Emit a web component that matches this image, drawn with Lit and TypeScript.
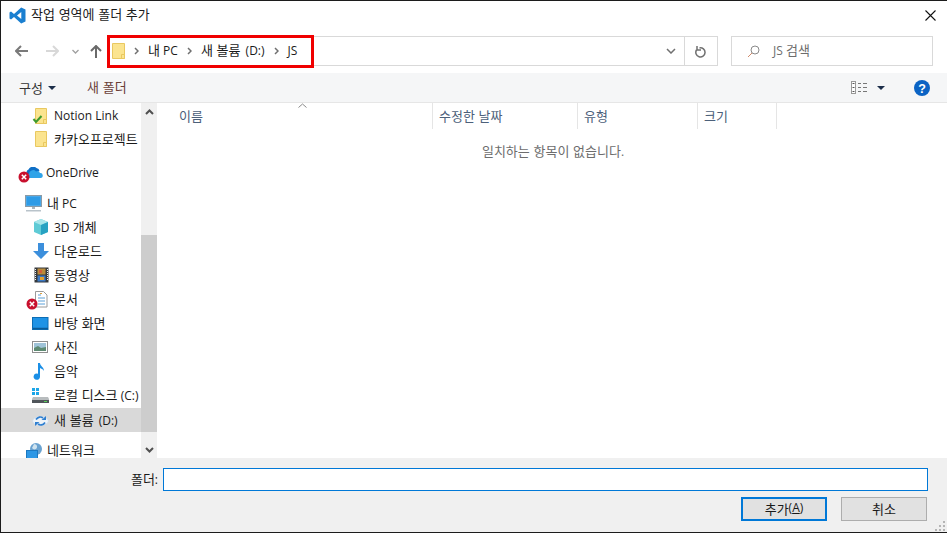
import { LitElement, html, css, TemplateResult } from "lit";
import { customElement } from "lit/decorators.js";

const k = (text: string) =>
  text.split(/([가-힣]+(?: [가-힣]+)*)/).map((p, i) => (i % 2 ? html`<span class="k">${p}</span>` : p));

const icons: Record<string, TemplateResult> = {
  notion: html`<svg width="18" height="18" viewBox="0 0 18 18"><path d="M3.500 2.500h11v15h-11z" fill="#fbe48f" stroke="#e9c860"/><path d="M11.500 13.500h3v4h-3z" fill="#fbe48f" stroke="#e9c860"/><path d="M1.500 13l2.500 3 5.500-6" fill="none" stroke="#3e9a2d" stroke-width="2"/></svg>`,
  folder: html`<svg width="18" height="18" viewBox="0 0 18 18"><path d="M3.500 1.500h11v15h-11z" fill="#fbe48f" stroke="#e9c860"/><path d="M11.500 12.500h3v4h-3z" fill="#fbe48f" stroke="#e9c860"/></svg>`,
  cloud: html`<svg width="19" height="11" viewBox="0 0 19 11"><path d="M3 7a3 3 0 0 1 1.500-4.500 5 5 0 0 1 8-1.500 3.500 3.500 0 0 1 3 3L9 7z" fill="#0f6fc6"/><path d="M5 11a2.500 2.500 0 0 1 0-4 4 4 0 0 1 7-2.500 3 3 0 0 1 4 1.500 2.500 2.500 0 0 1 .5 5z" fill="#2fa3e8"/></svg>`,
  pc: html`<svg width="18" height="17" viewBox="0 0 18 17"><rect x=".5" y=".5" width="16" height="11" fill="#4aa8e8" stroke="#8a9aa6"/><rect x="2" y="2" width="13" height="8" fill="#2e9be6"/><path d="M7 12h3v2H7z" fill="#a8b4bc"/><path d="M1 15h15v1.500H1z" fill="#b9c3ca"/></svg>`,
  cube: html`<svg width="18" height="18" viewBox="0 0 18 18"><path d="M9 1l7 3v10l-7 3-7-3V4z" fill="#5fcbd6"/><path d="M9 7L2 4l7-3 7 3z" fill="#a8e6ea"/><path d="M9 7v10l7-3V4z" fill="#27a2c2"/></svg>`,
  down: html`<svg width="18" height="18" viewBox="0 0 18 18"><path d="M6 1h6v8h5l-8 8-8-8h5z" fill="#3c8fdc"/></svg>`,
  video: html`<svg width="17" height="16" viewBox="-2 0 17 16"><rect x=".5" y=".5" width="14" height="15" fill="#35393c"/><rect x="3.500" y="1.500" width="8" height="6" fill="#b98b3a"/><rect x="3.500" y="8.500" width="8" height="6" fill="#3b79c4"/><path d="M1.500 2v12M13.500 2v12" stroke="#eee" stroke-dasharray="1 1"/><path d="M5 3h3v3H5z" fill="#d25f3a"/><path d="M6 10h4v3H6z" fill="#e0a030"/></svg>`,
  doc: html`<svg width="18" height="18" viewBox="-3 -1 18 18"><path d="M.5.5h8l3.500 3.500v12H.5z" fill="#fff" stroke="#9a9a9a"/><path d="M3 4h3M3 7h7M3 10h7M3 13h7" stroke="#5aa0d8"/><path d="M5 2.500h2" stroke="#e0a040"/></svg>`,
  desk: html`<svg width="17" height="13" viewBox="0 0 17 13"><rect x=".5" y=".5" width="15.500" height="12" fill="#1f93e6" stroke="#0c6db5"/><path d="M1 11.500h15" stroke="#0b5a96" stroke-width="1.500"/></svg>`,
  pic: html`<svg width="16" height="12" viewBox="0 0 16 12"><rect x=".5" y=".5" width="15" height="11" fill="#fff" stroke="#8f8f8f"/><rect x="2" y="2" width="12" height="8" fill="#9fc3d8"/><path d="M2 10V7l4-2 3 2 5-1v4z" fill="#5d8a72"/></svg>`,
  music: html`<svg width="14" height="17" viewBox="-2 0 14 17"><path d="M4 0h2c0 3 4 4 4 8-1-2-3-2.500-4-3V13.500a3.200 3.200 0 1 1-2-2.800z" fill="#1b8fe6"/></svg>`,
  disk: html`<svg width="17" height="15" viewBox="0 0 17 15"><path d="M0 0h3v3H0zM4 0h3v3H4zM0 4h3v3H0zM4 4h3v3H4z" fill="#1ca6e8"/><path d="M1 9h15l1 2v4H0v-4z" fill="#b8bcbe"/><path d="M0 12h17v3H0z" fill="#50555a"/><path d="M12 13h3v1h-3z" fill="#58d058"/></svg>`,
  vol: html`<svg width="17" height="11" viewBox="0 0 17 11"><ellipse cx="8.500" cy="6" rx="8" ry="4.500" fill="#eef3f8" stroke="#d0dbe6"/><path d="M4 4.500c2-3 5-3 7-1.500M13 7.500c-2 3-5 3-7 1.500" fill="none" stroke="#2f7fd0" stroke-width="1.700"/><path d="M9.500 5h4.500V1zM7.500 7H3v4z" fill="#2f7fd0"/></svg>`,
  net: html`<svg width="18" height="15" viewBox="0 0 18 15"><circle cx="11" cy="6" r="6" fill="#6aa2d0"/><path d="M9 1c3 0 4 3 2 5-2 1-3 0-4-1z" fill="#cfe3ef"/><rect x="1.500" y="7.500" width="11" height="8" fill="#2d97e5" stroke="#1c78c0"/></svg>`,
};
const badge = html`<svg width="12" height="12" viewBox="0 0 12 12"><circle cx="6" cy="6" r="5.500" fill="#c8102e"/><path d="M3.800 3.800l4.400 4.400M8.200 3.800L3.800 8.200" stroke="#fff" stroke-width="1.500"/></svg>`;
const chev = html`<svg class="sep" width="5" height="8" viewBox="0 0 5 8"><path d="M1 1l3 3-3 3" fill="none" stroke="#707070" stroke-width="1.500"/></svg>`;
const caretDown = html`<svg width="8" height="4" viewBox="0 0 8 4"><path d="M0 0h8L4 4z" fill="#1c2e4a"/></svg>`;

type Row = { label: string; icon: string; cls: string; badge?: string };
const rows: Row[] = [
  { label: "Notion Link", icon: "notion", cls: "l1" },
  { label: "카카오프로젝트", icon: "folder", cls: "l1" },
  { label: "OneDrive", icon: "cloud", cls: "l0 g9", badge: "od" },
  { label: "내 PC", icon: "pc", cls: "l0b g7" },
  { label: "3D 개체", icon: "cube", cls: "l1" },
  { label: "다운로드", icon: "down", cls: "l1" },
  { label: "동영상", icon: "video", cls: "l1" },
  { label: "문서", icon: "doc", cls: "l1", badge: "doc" },
  { label: "바탕 화면", icon: "desk", cls: "l1" },
  { label: "사진", icon: "pic", cls: "l1" },
  { label: "음악", icon: "music", cls: "l1" },
  { label: "로컬 디스크 (C:)", icon: "disk", cls: "l1" },
  { label: "새 볼륨 (D:)", icon: "vol", cls: "l1 sel g1" },
  { label: "네트워크", icon: "net", cls: "l0b g7 last" },
];

@customElement("app-root")
export class AppRoot extends LitElement {
  static styles = css`
    :host { display: block; width: 947px; height: 533px; overflow: hidden; font: 12px/16px "Open Sans", "Noto Sans CJK KR", sans-serif; color: #1a1a1a; }
    * { box-sizing: border-box; }
    .k { font-size: 13px; line-height: 1; word-spacing: .8px; font-family: "Noto Sans CJK KR", sans-serif; }
    .win { width: 947px; height: 533px; display: flex; flex-direction: column; background: #fff; border-top: 1px solid #1c1c1c; border-left: 1px solid #1c1c1c; border-bottom: 1px solid #1c1c1c; }
    .title { height: 30px; flex: none; display: flex; align-items: center; padding: 0 8px 2px 8px; gap: 5px; }
    .tx { flex: 1; }
    .close { margin-right: 3px; }
    .nav { height: 42px; flex: none; display: flex; align-items: flex-start; padding: 5px 14px 0 12px; }
    .arrows { width: 94px; height: 30px; display: flex; align-items: center; }
    .a1 { margin-left: 2px; } .a2 { margin-left: 18px; } .a3 { margin-left: 13px; } .a4 { margin-left: 11px; }
    .addr { position: relative; width: 611px; height: 30px; border: 1px solid #d9d9d9; display: flex; align-items: center; }
    .crumbs { flex: 1; display: flex; align-items: center; padding-left: 4px; height: 100%; }
    .crumbs svg { flex: none; }
    .sep { margin: 0 9px; }
    .wide { word-spacing: 2px; }
    .drop { width: 26px; display: flex; justify-content: center; }
    .refresh { width: 33px; height: 100%; border-left: 1px solid #d9d9d9; display: flex; align-items: center; justify-content: center; }
    .mark { position: absolute; left: -1px; top: -2px; width: 207px; height: 33px; border: 3px solid #f00000; pointer-events: none; }
    .search { margin-left: 13px; width: 202px; height: 30px; border: 1px solid #d9d9d9; display: flex; align-items: center; padding-left: 15px; gap: 13px; color: #6d6d6d; }
    .tools { height: 30px; flex: none; background: #f5f6f7; border-bottom: 1px solid #e6e6e6; display: flex; align-items: center; padding: 0 17px 0 18px; }
    .org { display: flex; align-items: center; gap: 5px; width: 68px; color: #333; }
    .newf { flex: 1; color: #6a4038; }
    .view { display: flex; align-items: center; gap: 10px; margin-right: 29px; }
    .main { flex: 1; min-height: 0; display: flex; }
    .side { width: 140px; flex: none; overflow: hidden; }
    .row { position: relative; height: 24px; display: flex; align-items: center; white-space: nowrap; }
    .lb { margin-top: 2px; }
    .g9 { margin-top: 9px; } .g7 { margin-top: 7px; } .g1 { margin-top: 1px; }
    .l1 { padding-left: 31px; }
    .l0 { padding-left: 23px; }
    .l0b { padding-left: 24px; }
    .sel { background: #d9d9d9; word-spacing: 2px; }
    .last { height: 19px; align-items: flex-start; padding-top: 4px; }
    .last .ic { height: 15px; }
    .last .lb { margin-top: 0; line-height: 15px; }
    .ic { width: 22px; display: flex; align-items: center; flex: none; }
    .badge { position: absolute; display: flex; }
    .b-od { left: 17px; top: 11px; }
    .b-doc { left: 25px; top: 11px; }
    .sb { width: 16px; flex: none; background: #f0f0f0; display: flex; flex-direction: column; align-items: center; }
    .btn { height: 17px; flex: none; display: flex; align-items: center; justify-content: center; }
    .track { flex: 1; width: 100%; padding: 115px 0 9px; display: flex; }
    .thumb { flex: 1; background: #cdcdcd; }
    .list { flex: 1; margin-left: 2px; }
    .head { height: 26px; display: flex; }
    .col { position: relative; border-right: 1px solid #e5e5e5; color: #4c607a; padding: 6px 0 0 6px; flex: none; }
    .c1 { width: 274px; padding-left: 20px; }
    .c2 { width: 145px; } .c3 { width: 120px; } .c4 { width: 79px; }
    .caret { position: absolute; left: 139px; top: 0; }
    .empty { text-align: center; color: #6d6d6d; padding-top: 15px; }
    .foot { height: 74px; flex: none; background: #f0f0f0; display: grid; grid-template-columns: 157px 765px; grid-template-rows: 23px 24px; column-gap: 5px; row-gap: 6px; padding-top: 10px; position: relative; }
    .lab { text-align: right; align-self: center; }
    .inp { border: 1px solid #0078d7; background: #fff; }
    .btns { grid-column: 2; display: flex; justify-content: flex-end; gap: 14px; padding-right: 1px; }
    .b { width: 86px; height: 24px; background: #e1e1e1; border: 1px solid #adadad; display: flex; align-items: center; justify-content: center; padding-bottom: 2px; white-space: pre; }
    .b.def { border: 2px solid #0078d7; }
    .grip { position: absolute; right: 2px; bottom: 1px; }
    .qm { font: 700 12.5px "Liberation Sans", sans-serif; fill: #fff; }
  `;

  render() {
    return html`<div class="win">
      <div class="title">
        <svg width="17" height="17" viewBox="0 0 17 17"><path d="M12.200.5L16.500 2.500v12l-4.300 2L5 10l-3 2.500L.5 11.500V5.500L2 4.500l3 2.500zM12.300 5L8 8.500l4.300 3.500z" fill="#1a7fd0"/></svg>
        <span class="tx">${k("작업 영역에 폴더 추가")}</span>
        <svg class="close" width="11" height="11" viewBox="0 0 11 11"><path d="M.5.5l10 10M10.500.5l-10 10" stroke="#111" stroke-width="1.100"/></svg>
      </div>
      <div class="nav">
        <div class="arrows">
          <svg class="a1" width="13" height="12" viewBox="0 0 13 12"><path d="M6 1L1 6l5 5M1 6h12" fill="none" stroke="#7a7a7a" stroke-width="2"/></svg>
          <svg class="a2" width="13" height="12" viewBox="0 0 13 12"><path d="M7 1l5 5-5 5M12 6H0" fill="none" stroke="#d8d8d8" stroke-width="2"/></svg>
          <svg class="a3" width="7" height="5" viewBox="0 0 7 5"><path d="M.5 1l3 3 3-3" fill="none" stroke="#a0a0a0" stroke-width="1.300"/></svg>
          <svg class="a4" width="12" height="13" viewBox="0 0 12 13"><path d="M1 6l5-5 5 5M6 1v12" fill="none" stroke="#6a6a6a" stroke-width="2"/></svg>
        </div>
        <div class="addr">
          <div class="crumbs">
            <svg width="13" height="16" viewBox="0 0 13 16"><path d="M.5.5h12v15H.5z" fill="#fbe48f" stroke="#e9c860"/><path d="M9.500 11.500h3v4h-3z" fill="#fbe48f" stroke="#e9c860"/></svg>
            ${chev}
            <span>${k("내")} PC</span>
            ${chev}
            <span class="wide">${k("새 볼륨")} (D:)</span>
            ${chev}
            <span>JS</span>
          </div>
          <div class="drop"><svg width="10" height="6" viewBox="0 0 10 6"><path d="M1 1l4 4 4-4" fill="none" stroke="#707070" stroke-width="1.500"/></svg></div>
          <div class="refresh"><svg width="12" height="13" viewBox="0 0 12 13"><path d="M4.500 2.900a4.600 4.600 0 1 1-3 2.100M2 1v4h4" fill="none" stroke="#707070" stroke-width="1.500"/></svg></div>
          <div class="mark"></div>
        </div>
        <div class="search">
          <svg width="13" height="13" viewBox="0 0 13 13"><circle cx="8" cy="5" r="4" fill="none" stroke="#8a8a8a"/><path d="M5 8l-4 4" stroke="#d08a6a"/></svg>
          <span>JS ${k("검색")}</span>
        </div>
      </div>
      <div class="tools">
        <div class="org">${k("구성")} ${caretDown}</div>
        <div class="newf">${k("새 폴더")}</div>
        <div class="view">
          <svg width="16" height="13" viewBox="0 0 16 13"><rect x=".5" y=".5" width="4" height="12" fill="#fff" stroke="#999"/><path d="M1.500 2.500h2M1.500 6.500h2M1.500 10.500h2" stroke="#555"/><path d="M7 2.500h3M12 2.500h4M7 6.500h3M12 6.500h4M7 10.500h3M12 10.500h4" stroke="#777"/></svg>
          ${caretDown}
        </div>
        <svg width="16" height="16" viewBox="0 0 16 16"><circle cx="8" cy="8" r="8" fill="#0b63c4"/><text x="8" y="12.500" text-anchor="middle" class="qm">?</text></svg>
      </div>
      <div class="main">
        <div class="side">
          ${rows.map(r => html`<div class="row ${r.cls}">
            <span class="ic">${icons[r.icon]}</span><span class="lb">${k(r.label)}</span>
            ${r.badge ? html`<span class="badge b-${r.badge}">${badge}</span>` : ""}
          </div>`)}
        </div>
        <div class="sb">
          <div class="btn"><svg width="9" height="6" viewBox="0 0 9 6"><path d="M1 5l3.500-3.500L8 5" fill="none" stroke="#505050" stroke-width="2"/></svg></div>
          <div class="track"><div class="thumb"></div></div>
          <div class="btn"><svg width="9" height="6" viewBox="0 0 9 6"><path d="M1 1l3.500 3.500L8 1" fill="none" stroke="#505050" stroke-width="2"/></svg></div>
        </div>
        <div class="list">
          <div class="head">
            <div class="col c1">${k("이름")}
              <svg class="caret" width="9" height="5" viewBox="0 0 9 5"><path d="M.5 4.500l4-3.500 4 3.500" fill="none" stroke="#8a8a8a"/></svg>
            </div>
            <div class="col c2">${k("수정한 날짜")}</div>
            <div class="col c3">${k("유형")}</div>
            <div class="col c4">${k("크기")}</div>
          </div>
          <div class="empty">${k("일치하는 항목이 없습니다")}.</div>
        </div>
      </div>
      <div class="foot">
        <div class="lab">${k("폴더")}:</div>
        <div class="inp"></div>
        <div class="btns">
          <div class="b def">${k("추가")}(<u>A</u>)</div>
          <div class="b">${k("취소")}</div>
        </div>
        <svg class="grip" width="10" height="10" viewBox="0 0 10 10" fill="#b5b5b5"><path d="M8 0h2v2H8zM4 4h2v2H4zM8 4h2v2H8zM0 8h2v2H0zM4 8h2v2H4zM8 8h2v2H8z"/></svg>
      </div>
    </div>`;
  }
}
